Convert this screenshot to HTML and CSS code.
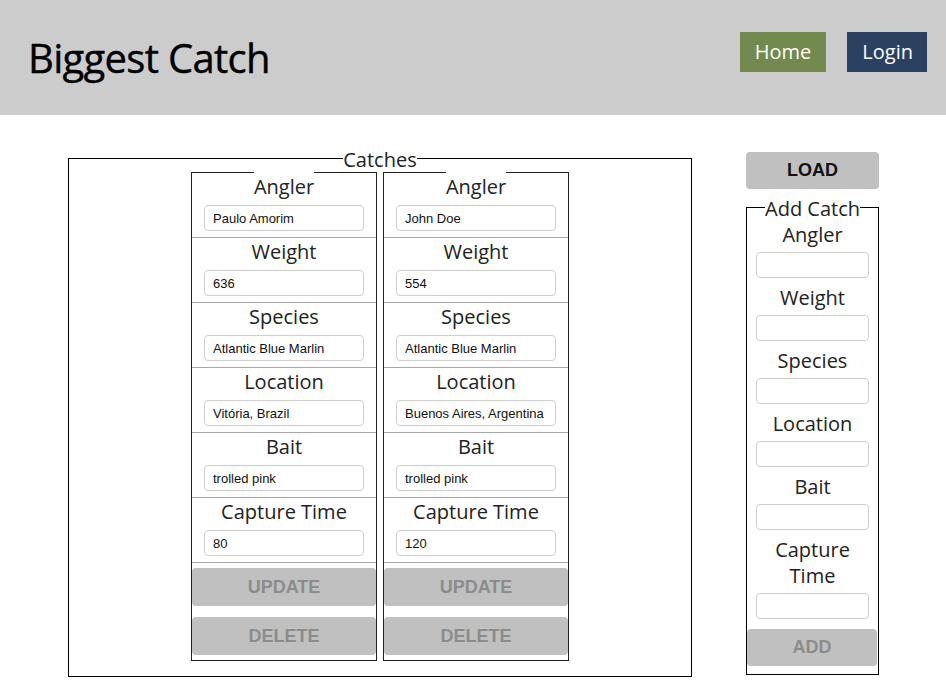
FILE: index.html
```html
<!DOCTYPE html>
<html lang="en">
<head>
<meta charset="utf-8">
<title>Biggest Catch</title>
<link rel="stylesheet" href="styles.css">
</head>
<body>
<header class="topbar">
  <h1 class="brand">Biggest Catch</h1>
  <nav class="nav">
    <a class="nav-btn nav-home" href="#">Home</a>
    <a class="nav-btn nav-login" href="#">Login</a>
  </nav>
</header>
<main class="content">
  <fieldset class="catches">
    <legend class="catches-title">Catches</legend>
    <div class="cards">
      <fieldset class="card">
        <legend class="card-gap"></legend>
        <div class="field"><label class="field-label">Angler</label><input class="field-input" value="Paulo Amorim"></div>
        <div class="field"><label class="field-label">Weight</label><input class="field-input" value="636"></div>
        <div class="field"><label class="field-label">Species</label><input class="field-input" value="Atlantic Blue Marlin"></div>
        <div class="field"><label class="field-label">Location</label><input class="field-input" value="Vitória, Brazil"></div>
        <div class="field"><label class="field-label">Bait</label><input class="field-input" value="trolled pink"></div>
        <div class="field"><label class="field-label">Capture Time</label><input class="field-input" value="80"></div>
        <button class="btn btn-muted btn-update">UPDATE</button>
        <button class="btn btn-muted btn-delete">DELETE</button>
      </fieldset>
      <fieldset class="card">
        <legend class="card-gap"></legend>
        <div class="field"><label class="field-label">Angler</label><input class="field-input" value="John Doe"></div>
        <div class="field"><label class="field-label">Weight</label><input class="field-input" value="554"></div>
        <div class="field"><label class="field-label">Species</label><input class="field-input" value="Atlantic Blue Marlin"></div>
        <div class="field"><label class="field-label">Location</label><input class="field-input" value="Buenos Aires, Argentina"></div>
        <div class="field"><label class="field-label">Bait</label><input class="field-input" value="trolled pink"></div>
        <div class="field"><label class="field-label">Capture Time</label><input class="field-input" value="120"></div>
        <button class="btn btn-muted btn-update">UPDATE</button>
        <button class="btn btn-muted btn-delete">DELETE</button>
      </fieldset>
    </div>
  </fieldset>
  <aside class="side">
    <button class="btn btn-load">LOAD</button>
    <fieldset class="add">
      <legend class="add-title">Add Catch</legend>
      <div class="add-field"><label class="add-label">Angler</label><input class="add-input"></div>
      <div class="add-field"><label class="add-label">Weight</label><input class="add-input"></div>
      <div class="add-field"><label class="add-label">Species</label><input class="add-input"></div>
      <div class="add-field"><label class="add-label">Location</label><input class="add-input"></div>
      <div class="add-field"><label class="add-label">Bait</label><input class="add-input"></div>
      <div class="add-field"><label class="add-label">Capture Time</label><input class="add-input"></div>
      <button class="btn btn-muted btn-add">ADD</button>
    </fieldset>
  </aside>
</main>
</body>
</html>
```

FILE: styles.css
```css
* { box-sizing: border-box; }

body {
  margin: 0;
  font-family: "Open Sans", "Noto Sans", sans-serif;
  color: #222;
  background: #fff;
}

.topbar {
  height: 115px;
  background: #cccccc;
  display: flex;
  justify-content: space-between;
  align-items: flex-start;
  padding: 0 19px 0 28px;
}

.brand {
  margin: 34px 0 0;
  font-size: 40px;
  line-height: 48px;
  font-weight: 400;
  letter-spacing: -0.7px;
  color: #000;
  -webkit-text-stroke: 0.4px #000;
}

.nav {
  display: flex;
  gap: 21px;
  margin-top: 32px;
}

.nav-btn {
  display: block;
  height: 40px;
  line-height: 40px;
  font-size: 20px;
  color: #fff;
  text-decoration: none;
}

.nav-home { background: #728a4d; padding: 0 15px; }
.nav-login { background: #2b4161; padding: 0 14px 0 15px; }

.content {
  display: flex;
  justify-content: space-between;
  align-items: flex-start;
  padding: 31px 67px 0 68px;
}

.catches {
  width: 624px;
  min-width: 0;
  margin: 0;
  padding: 2px 0 15px;
  border: 1px solid #000;
}

.catches-title {
  margin: 0 auto;
  padding: 4px 0 0;
  font-size: 20px;
  line-height: 20px;
}

.cards {
  display: flex;
  justify-content: center;
  gap: 6px;
}

.card {
  width: 186px;
  min-width: 0;
  margin: 0;
  padding: 0 0 5px;
  border: 1px solid #222;
}

.card-gap {
  width: 60px;
  height: 0;
  padding: 0;
  margin: 0 auto;
}

.field {
  display: flex;
  flex-direction: column;
  align-items: center;
  padding-bottom: 6px;
  border-bottom: 1px solid #a8a8a8;
}

.field-label {
  font-size: 20px;
  line-height: 27px;
  margin-bottom: 5px;
  color: #222;
}

.field-input {
  width: 160px;
  height: 26px;
  margin: 0;
  padding: 0 7px 0 8px;
  border: 1px solid #cfcfcf;
  border-radius: 4px;
  font-family: "Liberation Sans", Arial, sans-serif;
  font-size: 13px;
  color: #111;
  background: #fff;
}

.btn {
  display: block;
  border: none;
  border-radius: 4px;
  background: #c0c0c0;
  font-family: "Liberation Sans", Arial, sans-serif;
  font-weight: 700;
  font-size: 18px;
  padding: 0;
  cursor: pointer;
}

.btn-muted { color: #8c8c8c; }

.btn-update {
  width: 100%;
  height: 38px;
  margin-top: 5px;
}

.btn-delete {
  width: 100%;
  height: 38px;
  margin-top: 11px;
}

.side {
  width: 133px;
  padding-top: 6px;
}

.btn-load {
  width: 133px;
  height: 37px;
  color: #111;
}

.add {
  width: 133px;
  min-width: 0;
  margin: 7px 0 0;
  padding: 3px 9px 8px;
  border: 1px solid #000;
}

.add-title {
  padding: 3px 0 0;
  margin: 0 auto;
  font-size: 20px;
  line-height: 20px;
}

.add-field {
  display: flex;
  flex-direction: column;
  align-items: center;
  margin-bottom: 7px;
}

.add-label {
  font-size: 20px;
  line-height: 26px;
  margin-bottom: 4px;
  text-align: center;
  color: #222;
}

.add-input {
  width: 100%;
  height: 26px;
  margin: 0;
  padding: 0 6px;
  border: 1px solid #cfcfcf;
  border-radius: 4px;
  background: #fff;
}

.btn-add {
  width: calc(100% + 17px);
  height: 37px;
  margin: 10px -8px 0 -9px;
}
```
